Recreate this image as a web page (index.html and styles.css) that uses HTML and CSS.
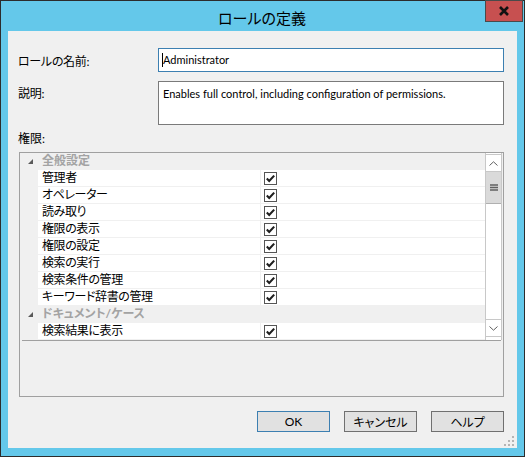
FILE: index.html
```html
<!DOCTYPE html>
<html lang="ja">
<head>
  <meta charset="UTF-8" />
  <title>ロールの定義</title>
  <link rel="stylesheet" href="styles.css">
</head>
<body>
  <div class="window">
    <div class="titlebar">
      <span></span>
      <span class="title">ロールの定義</span>
      <button class="close">
        <svg width="12" height="10" viewBox="0 0 12 10"><path d="M2 1 L10 9 M10 1 L2 9" stroke="#111" stroke-width="2.6"/></svg>
      </button>
    </div>

    <div class="client">
      <div class="field">
        <label>ロールの名前:</label>
        <div class="input focused"><span class="caret"></span>Administrator</div>
      </div>
      <div class="field field-top">
        <label>説明:</label>
        <div class="input textarea">Enables full control, including configuration of permissions.</div>
      </div>

      <div class="perm-label">権限:</div>

      <div class="grid">
        <div class="list">
          <div class="rows">
            <div class="cat">
              <span class="margin"><svg width="5" height="5" viewBox="0 0 5 5"><polygon points="5,0 5,5 0,5" fill="#595959"/></svg></span>
              <span class="cat-name">全般設定</span>
            </div>
            <div class="row"><span class="margin"></span><span class="name">管理者</span><span class="val"><svg class="chk" width="13" height="13" viewBox="0 0 13 13"><rect x="0.5" y="0.5" width="12" height="12" fill="#fff" stroke="#555"/><path d="M2.8 6.6 L5.2 9 L10.2 3.6" fill="none" stroke="#1e1e1e" stroke-width="2.1"/></svg></span></div>
            <div class="row"><span class="margin"></span><span class="name">オペレーター</span><span class="val"><svg class="chk" width="13" height="13" viewBox="0 0 13 13"><rect x="0.5" y="0.5" width="12" height="12" fill="#fff" stroke="#555"/><path d="M2.8 6.6 L5.2 9 L10.2 3.6" fill="none" stroke="#1e1e1e" stroke-width="2.1"/></svg></span></div>
            <div class="row"><span class="margin"></span><span class="name">読み取り</span><span class="val"><svg class="chk" width="13" height="13" viewBox="0 0 13 13"><rect x="0.5" y="0.5" width="12" height="12" fill="#fff" stroke="#555"/><path d="M2.8 6.6 L5.2 9 L10.2 3.6" fill="none" stroke="#1e1e1e" stroke-width="2.1"/></svg></span></div>
            <div class="row"><span class="margin"></span><span class="name">権限の表示</span><span class="val"><svg class="chk" width="13" height="13" viewBox="0 0 13 13"><rect x="0.5" y="0.5" width="12" height="12" fill="#fff" stroke="#555"/><path d="M2.8 6.6 L5.2 9 L10.2 3.6" fill="none" stroke="#1e1e1e" stroke-width="2.1"/></svg></span></div>
            <div class="row"><span class="margin"></span><span class="name">権限の設定</span><span class="val"><svg class="chk" width="13" height="13" viewBox="0 0 13 13"><rect x="0.5" y="0.5" width="12" height="12" fill="#fff" stroke="#555"/><path d="M2.8 6.6 L5.2 9 L10.2 3.6" fill="none" stroke="#1e1e1e" stroke-width="2.1"/></svg></span></div>
            <div class="row"><span class="margin"></span><span class="name">検索の実行</span><span class="val"><svg class="chk" width="13" height="13" viewBox="0 0 13 13"><rect x="0.5" y="0.5" width="12" height="12" fill="#fff" stroke="#555"/><path d="M2.8 6.6 L5.2 9 L10.2 3.6" fill="none" stroke="#1e1e1e" stroke-width="2.1"/></svg></span></div>
            <div class="row"><span class="margin"></span><span class="name">検索条件の管理</span><span class="val"><svg class="chk" width="13" height="13" viewBox="0 0 13 13"><rect x="0.5" y="0.5" width="12" height="12" fill="#fff" stroke="#555"/><path d="M2.8 6.6 L5.2 9 L10.2 3.6" fill="none" stroke="#1e1e1e" stroke-width="2.1"/></svg></span></div>
            <div class="row"><span class="margin"></span><span class="name">キーワード辞書の管理</span><span class="val"><svg class="chk" width="13" height="13" viewBox="0 0 13 13"><rect x="0.5" y="0.5" width="12" height="12" fill="#fff" stroke="#555"/><path d="M2.8 6.6 L5.2 9 L10.2 3.6" fill="none" stroke="#1e1e1e" stroke-width="2.1"/></svg></span></div>
            <div class="cat">
              <span class="margin"><svg width="5" height="5" viewBox="0 0 5 5"><polygon points="5,0 5,5 0,5" fill="#595959"/></svg></span>
              <span class="cat-name">ドキュメント/ケース</span>
            </div>
            <div class="row"><span class="margin"></span><span class="name">検索結果に表示</span><span class="val"><svg class="chk" width="13" height="13" viewBox="0 0 13 13"><rect x="0.5" y="0.5" width="12" height="12" fill="#fff" stroke="#555"/><path d="M2.8 6.6 L5.2 9 L10.2 3.6" fill="none" stroke="#1e1e1e" stroke-width="2.1"/></svg></span></div>
          </div>

          <div class="scrollbar">
            <div class="sb-btn"><svg width="9" height="5" viewBox="0 0 9 5"><path d="M0.5 4.5 L4.5 0.8 L8.5 4.5" fill="none" stroke="#606060"/></svg></div>
            <div class="sb-thumb"><svg width="8" height="7" viewBox="0 0 8 7"><path d="M0 1 H8 M0 3.5 H8 M0 6 H8" stroke="#606060" stroke-width="1.4"/></svg></div>
            <div class="sb-track"></div>
            <div class="sb-btn sb-down"><svg width="9" height="5" viewBox="0 0 9 5"><path d="M0.5 0.5 L4.5 4.2 L8.5 0.5" fill="none" stroke="#606060"/></svg></div>
          </div>
        </div>
        <div class="divider"></div>
        <div class="help-area"></div>
      </div>

      <div class="buttons">
        <button class="btn default">OK</button>
        <button class="btn">キャンセル</button>
        <button class="btn">ヘルプ</button>
      </div>

      <svg class="grip" width="10" height="10" viewBox="0 0 10 10">
        <rect x="8" y="0" width="2" height="2" fill="#b4b4b4"/>
        <rect x="4" y="4" width="2" height="2" fill="#b4b4b4"/>
        <rect x="8" y="4" width="2" height="2" fill="#b4b4b4"/>
        <rect x="0" y="8" width="2" height="2" fill="#b4b4b4"/>
        <rect x="4" y="8" width="2" height="2" fill="#b4b4b4"/>
        <rect x="8" y="8" width="2" height="2" fill="#b4b4b4"/>
      </svg>
    </div>
  </div>
</body>
</html>
```

FILE: styles.css
```css
body {
  margin: 0;
  font-family: "Lato", "Noto Sans CJK JP", sans-serif;
  font-size: 12px;
  color: #000;
  background: #fff;
}
.window {
  width: 525px;
  height: 457px;
  box-sizing: border-box;
  border: 1px solid #2c2c2c;
  background: #64c8ea;
  display: flex;
  flex-direction: column;
}
.titlebar {
  height: 30px;
  display: grid;
  grid-template-columns: 1fr auto 1fr;
  padding-right: 1px;
}
.title {
  font-family: "Noto Sans CJK JP", sans-serif;
  font-feature-settings: "palt";
  font-size: 15px;
  line-height: 30px;
  padding-top: 2px;
}
.close {
  justify-self: end;
  align-self: start;
  width: 38px;
  height: 22px;
  margin-top: -1px;
  padding: 0;
  border: 1px solid #4a4a4a;
  background: #c75050;
  display: flex;
  align-items: center;
  justify-content: center;
}
.client {
  position: relative;
  flex: 1;
  margin: 0 7px 8px 7px;
  background: #f0f0f0;
  padding: 17px 13px 0 10px;
  font-feature-settings: "palt";
}
.field {
  display: flex;
  align-items: center;
}
.field label {
  width: 140px;
  flex: none;
  letter-spacing: -0.3px;
}
.field-top {
  align-items: flex-start;
  margin-top: 9px;
}
.field-top label {
  padding-top: 3px;
}
.input {
  flex: 1;
  height: 24px;
  box-sizing: border-box;
  background: #fff;
  border: 1px solid #7a7a7a;
  padding: 2px 4px;
  font-size: 11px;
  line-height: 18px;
  position: relative;
}
.input.focused {
  border-color: #3c7fb1;
}
.caret {
  display: inline-block;
  width: 1px;
  height: 14px;
  background: #000;
  vertical-align: -3px;
  margin-left: -1px;
}
.textarea {
  height: 44px;
  padding-top: 3px;
}
.perm-label {
  margin-top: 6px;
  line-height: 16px;
  height: 16px;
  margin-bottom: 5px;
}
.grid {
  margin-left: 1px;
  height: 245px;
  box-sizing: border-box;
  border: 1px solid #a0a0a0;
  display: flex;
  flex-direction: column;
}
.list {
  height: 187px;
  display: flex;
  overflow: hidden;
}
.rows {
  flex: 1;
  display: flex;
  flex-direction: column;
}
.row, .cat {
  height: 17px;
  flex: none;
  display: flex;
  box-sizing: border-box;
  line-height: 16px;
}
.margin {
  width: 18px;
  flex: none;
  background: #f0f0f0;
  display: flex;
  justify-content: center;
  padding-top: 6px;
  box-sizing: border-box;
  padding-left: 2px;
}
.row .margin {
  padding: 0;
}
.cat {
  background: #f0f0f0;
}
.cat-name {
  padding-left: 4px;
  color: #a3a3a3;
  font-weight: bold;
}
.name {
  width: 223px;
  flex: none;
  background: #fff;
  padding-left: 4px;
  box-sizing: border-box;
  border-bottom: 1px solid #f0f0f0;
  border-right: 1px solid #f0f0f0;
  white-space: nowrap;
  letter-spacing: -0.4px;
}
.val {
  flex: 1;
  background: #fff;
  border-bottom: 1px solid #f0f0f0;
  padding: 2px 0 0 3px;
}
.chk {
  display: block;
}
.scrollbar {
  width: 17px;
  flex: none;
  margin-right: 1px;
  box-sizing: border-box;
  border-left: 1px solid #c8c8c8;
  border-right: 1px solid #c8c8c8;
  background: #fff;
  display: flex;
  flex-direction: column;
}
.sb-btn {
  height: 16px;
  margin-top: 1px;
  border-top: 1px solid #c8c8c8;
  border-bottom: 1px solid #c8c8c8;
  display: flex;
  align-items: center;
  justify-content: center;
}
.sb-down {
  margin-top: 0;
  margin-bottom: 3px;
}
.sb-thumb {
  height: 32px;
  box-sizing: border-box;
  background: #dadada;
  border-bottom: 1px solid #b0b0b0;
  display: flex;
  align-items: center;
  justify-content: center;
}
.sb-track {
  flex: 1;
}
.divider {
  height: 1px;
  margin: 0 2px;
  background: #a0a0a0;
}
.help-area {
  flex: 1;
}
.buttons {
  margin-top: 14px;
  display: flex;
  justify-content: flex-end;
  gap: 14px;
}
.btn {
  width: 73px;
  height: 21px;
  padding: 0;
  font-family: "Lato", "Noto Sans CJK JP", sans-serif;
  font-feature-settings: "palt";
  font-size: 12px;
  color: #000;
  background: #e1e1e1;
  border: 1px solid #707070;
}
.btn.default {
  border-color: #3c7fb1;
}
.grip {
  position: absolute;
  right: 3px;
  bottom: 2px;
}
```
